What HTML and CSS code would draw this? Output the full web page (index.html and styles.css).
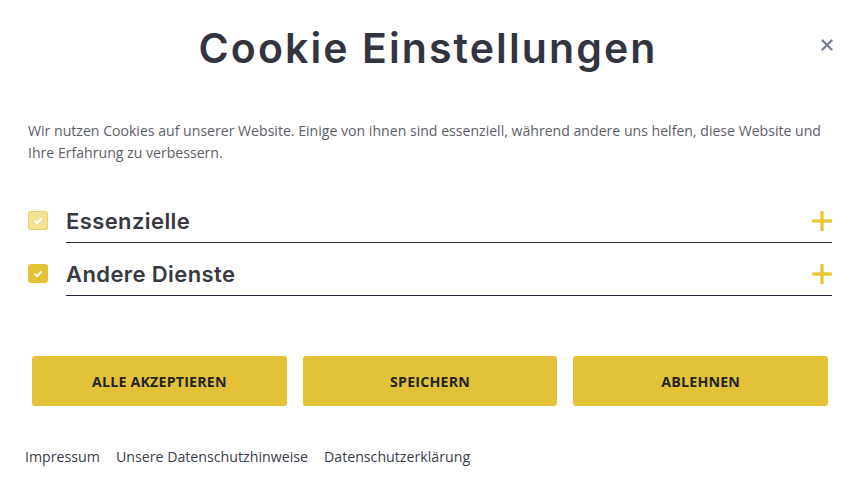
FILE: index.html
```html
<!DOCTYPE html>
<html lang="de">
<head>
  <meta charset="UTF-8">
  <meta name="viewport" content="width=device-width, initial-scale=1.0">
  <title>Cookie Einstellungen</title>
  <link rel="stylesheet" href="styles.css">
</head>
<body>
  <div class="cookie-modal">
    <div class="cookie-header">
      <h1>Cookie Einstellungen</h1>
      <button class="close-button" aria-label="Schließen">
        <svg width="12" height="12" viewBox="0 0 12 12"><path d="M1.5 1.5 L10.5 10.5 M10.5 1.5 L1.5 10.5" stroke="#7b7f95" stroke-width="2.4" stroke-linecap="round"/></svg>
      </button>
    </div>

    <p class="cookie-intro">Wir nutzen Cookies auf unserer Website. Einige von ihnen sind essenziell, während andere uns helfen, diese Website und Ihre Erfahrung zu verbessern.</p>

    <div class="cookie-groups">
      <div class="cookie-group">
        <span class="check disabled">
          <svg width="10" height="10" viewBox="0 0 10 10"><path d="M2 5.2 L4.2 7.2 L8 3" fill="none" stroke="#fff" stroke-width="2" stroke-linecap="round" stroke-linejoin="round"/></svg>
        </span>
        <div class="group-title">
          <span>Essenzielle</span>
          <svg class="plus" width="20" height="20" viewBox="0 0 20 20"><path d="M10 1.5 V18.5 M1.5 10 H18.5" stroke="#e8c638" stroke-width="3.4" stroke-linecap="round"/></svg>
        </div>
      </div>
      <div class="cookie-group">
        <span class="check">
          <svg width="10" height="10" viewBox="0 0 10 10"><path d="M2 5.2 L4.2 7.2 L8 3" fill="none" stroke="#fff" stroke-width="2" stroke-linecap="round" stroke-linejoin="round"/></svg>
        </span>
        <div class="group-title">
          <span>Andere Dienste</span>
          <svg class="plus" width="20" height="20" viewBox="0 0 20 20"><path d="M10 1.5 V18.5 M1.5 10 H18.5" stroke="#e8c638" stroke-width="3.4" stroke-linecap="round"/></svg>
        </div>
      </div>
    </div>

    <div class="cookie-buttons">
      <button class="btn">Alle akzeptieren</button>
      <button class="btn">Speichern</button>
      <button class="btn">Ablehnen</button>
    </div>

    <div class="cookie-links">
      <a href="#">Impressum</a>
      <a href="#">Unsere Datenschutzhinweise</a>
      <a href="#">Datenschutzerklärung</a>
    </div>
  </div>
</body>
</html>
```

FILE: styles.css
```css
body {
  margin: 0;
  background: #fff;
  font-family: "Open Sans", Arial, sans-serif;
}
.cookie-modal {
  width: 860px;
  height: 502px;
  box-sizing: border-box;
  padding: 0 28px 0 24px;
}
.cookie-header {
  position: relative;
  height: 96px;
  display: flex;
  justify-content: center;
}
.cookie-header h1 {
  margin: 22px 0 0 0;
  font-family: Inter, "Noto Sans", sans-serif;
  font-weight: 600;
  font-size: 41px;
  line-height: 52px;
  color: #32343f;
  letter-spacing: 2.1px;
}
.close-button {
  position: absolute;
  right: -2px;
  top: 39px;
  padding: 0;
  border: none;
  background: none;
  width: 14px;
  height: 14px;
  cursor: pointer;
}
.cookie-intro {
  margin: 24px 0 0 4px;
  font-size: 14.1px;
  line-height: 22px;
  color: #5e6068;
}
.cookie-groups {
  margin-top: 36px;
  padding-left: 4px;
}
.cookie-group {
  display: flex;
  align-items: flex-start;
  margin-bottom: 10px;
}
.check {
  width: 20px;
  height: 19px;
  border-radius: 3px;
  background: #e3c237;
  display: flex;
  align-items: center;
  justify-content: center;
  margin-top: 11px;
  margin-right: 18px;
  flex-shrink: 0;
}
.check.disabled {
  background: #f2e394;
  box-shadow: inset 0 0 0 1px #ead06a;
}
.group-title {
  flex: 1;
  display: flex;
  justify-content: space-between;
  align-items: center;
  height: 42px;
  border-bottom: 1px solid #23253a;
  font-family: Inter, "Noto Sans", sans-serif;
  font-weight: 600;
  font-size: 22px;
  letter-spacing: 0.4px;
  color: #363842;
}
.cookie-buttons {
  display: flex;
  gap: 16px;
  margin: 60px 4px 0 8px;
}
.btn {
  flex: 1;
  height: 50px;
  border: none;
  border-radius: 3px;
  background: #e3c237;
  color: #24252b;
  font-family: "Open Sans", Arial, sans-serif;
  font-weight: 700;
  font-size: 14.2px;
  text-transform: uppercase;
  letter-spacing: 0.2px;
  cursor: pointer;
}
.cookie-links {
  display: flex;
  gap: 16px;
  margin-top: 41px;
  padding-left: 1px;
}
.cookie-links a {
  color: #3a3d4a;
  text-decoration: none;
  font-size: 14.2px;
}
```
